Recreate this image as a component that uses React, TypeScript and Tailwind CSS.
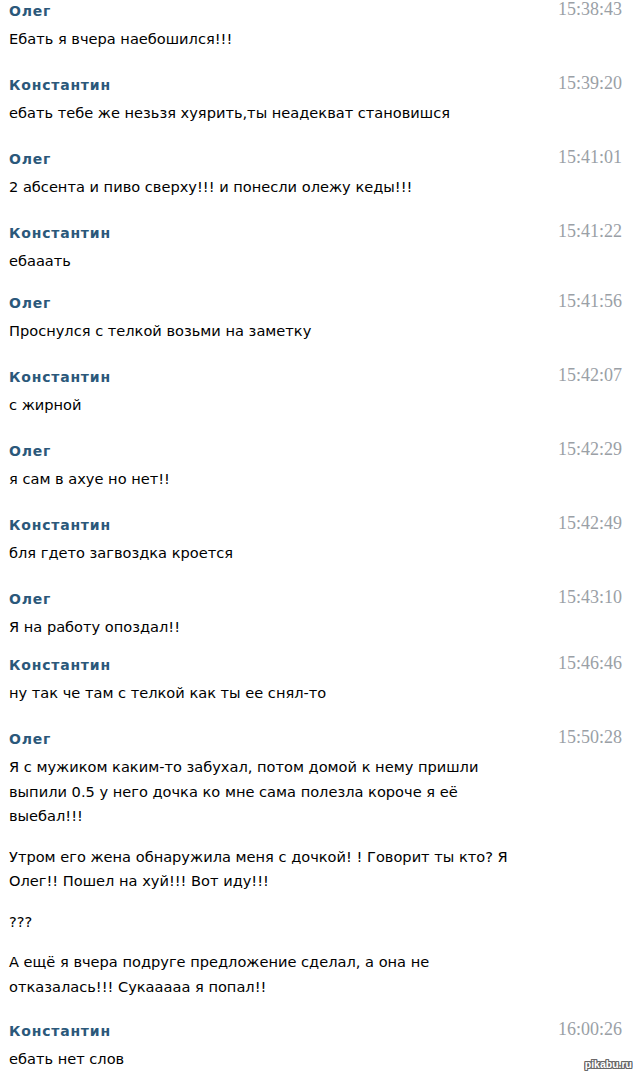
import React from "react";

type Block = {
  name: string;
  time: string;
  cls: string;
  bodyCls: string;
  paras: string[];
};

const blocks: Block[] = [
  { name: "Олег", time: "15:38:43", cls: "mt-[1px]", bodyCls: "mt-[6px]", paras: ["Ебать я вчера наебошился!!!"] },
  { name: "Константин", time: "15:39:20", cls: "mt-[23.5px]", bodyCls: "mt-[6px]", paras: ["ебать тебе же незьзя хуярить,ты неадекват становишся"] },
  { name: "Олег", time: "15:41:01", cls: "mt-[23.5px]", bodyCls: "mt-[6px]", paras: ["2 абсента и пиво сверху!!! и понесли олежу кеды!!!"] },
  { name: "Константин", time: "15:41:22", cls: "mt-[23.5px]", bodyCls: "mt-[6px]", paras: ["ебааать"] },
  { name: "Олег", time: "15:41:56", cls: "mt-[19.5px]", bodyCls: "mt-[6px]", paras: ["Проснулся с телкой возьми на заметку"] },
  { name: "Константин", time: "15:42:07", cls: "mt-[23.5px]", bodyCls: "mt-[6px]", paras: ["с жирной"] },
  { name: "Олег", time: "15:42:29", cls: "mt-[23.5px]", bodyCls: "mt-[6px]", paras: ["я сам в ахуе но нет!!"] },
  { name: "Константин", time: "15:42:49", cls: "mt-[23.5px]", bodyCls: "mt-[6px]", paras: ["бля гдето загвоздка кроется"] },
  { name: "Олег", time: "15:43:10", cls: "mt-[23.5px]", bodyCls: "mt-[6px]", paras: ["Я на работу опоздал!!"] },
  { name: "Константин", time: "15:46:46", cls: "mt-[15.5px]", bodyCls: "mt-[6px]", paras: ["ну так че там с телкой как ты ее снял-то"] },
  {
    name: "Олег",
    time: "15:50:28",
    cls: "mt-[23.5px]",
    bodyCls: "mt-[6px]",
    paras: [
      "Я с мужиком каким-то забухал, потом домой к нему пришли выпили 0.5 у него дочка ко мне сама полезла короче я её выебал!!!",
      "Утром его жена обнаружила меня с дочкой! ! Говорит ты кто? Я Олег!! Пошел на хуй!!! Вот иду!!!",
      "???",
      "А ещё я вчера подруге предложение сделал, а она не отказалась!!! Сукааааа я попал!!",
    ],
  },
  { name: "Константин", time: "16:00:26", cls: "mt-[21.5px]", bodyCls: "mt-[6px]", paras: ["ебать нет слов"] },
];

export default function App() {
  return (
    <div className="relative h-[1076px] w-[636px] overflow-hidden bg-white font-['DejaVu_Sans',Verdana,sans-serif]">
      {blocks.map((b, i) => (
        <div key={i} className={`flex flex-col pl-[9px] pr-[14px] ${b.cls}`}>
          <div className="flex h-[20px] items-start justify-between">
            <span className="text-[14px] font-bold leading-[20px] tracking-[0.8px] text-[#2b587a]">{b.name}</span>
            <span className="-mt-[2px] font-['Liberation_Serif','Times_New_Roman',serif] text-[18px] leading-[20px] text-[#9aa0a6]">
              {b.time}
            </span>
          </div>
          <div className={`flex w-[522px] flex-col gap-[16px] ${b.bodyCls}`}>
            {b.paras.map((p, j) => (
              <p key={j} className="text-[14.6px] leading-[24.5px] text-black">
                {p}
              </p>
            ))}
          </div>
        </div>
      ))}
      <div className="absolute bottom-[6px] right-[4px] font-['Liberation_Sans',Arial,sans-serif] text-[10.5px] font-bold leading-[12px] text-white [text-shadow:1px_0_0_#666,-1px_0_0_#666,0_1px_0_#666,0_-1px_0_#666,1px_1px_0_#666,-1px_-1px_0_#666,1px_-1px_0_#666,-1px_1px_0_#666]">
        pikabu.ru
      </div>
    </div>
  );
}
